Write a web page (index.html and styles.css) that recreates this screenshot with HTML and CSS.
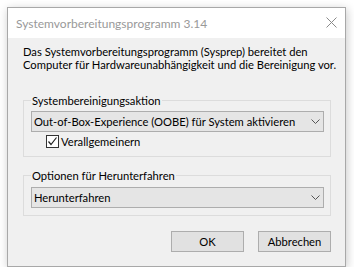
FILE: index.html
```html
<!DOCTYPE html>
<html lang="de">
<head>
    <meta charset="UTF-8">
    <title>Systemvorbereitungsprogramm 3.14</title>
    <link rel="stylesheet" href="styles.css">
</head>
<body>
    <div class="window">
        <div class="titlebar">
            <span class="title">Systemvorbereitungsprogramm 3.14</span>
            <svg class="close" width="11" height="11" viewBox="0 0 11 11">
                <path d="M0.5 0.5 L10.5 10.5 M10.5 0.5 L0.5 10.5" stroke="#8a8a8a" stroke-width="1" fill="none"/>
            </svg>
        </div>

        <div class="content">
            <p class="intro">Das Systemvorbereitungsprogramm (Sysprep) bereitet den<br>Computer für Hardwareunabhängigkeit und die Bereinigung vor.</p>

            <div class="group first">
                <span class="legend">Systembereinigungsaktion</span>
                <div class="combo">
                    <span>Out-of-Box-Experience (OOBE) für System aktivieren</span>
                    <svg width="9" height="5" viewBox="0 0 9 5"><path d="M0.5 0.5 L4.5 4.5 L8.5 0.5" stroke="#555" fill="none"/></svg>
                </div>
                <label class="check">
                    <span class="box">
                        <svg width="11" height="11" viewBox="0 0 11 11"><path d="M1.5 5.5 L4 8.5 L9.5 1.5" stroke="#222" stroke-width="1.2" fill="none"/></svg>
                    </span>
                    Verallgemeinern
                </label>
            </div>

            <div class="group second">
                <span class="legend">Optionen für Herunterfahren</span>
                <div class="combo">
                    <span>Herunterfahren</span>
                    <svg width="9" height="5" viewBox="0 0 9 5"><path d="M0.5 0.5 L4.5 4.5 L8.5 0.5" stroke="#555" fill="none"/></svg>
                </div>
            </div>

            <div class="buttons">
                <button class="btn">OK</button>
                <button class="btn">Abbrechen</button>
            </div>
        </div>
    </div>
</body>
</html>
```

FILE: styles.css
```css
body {
    margin: 0;
    background: #ffffff;
    font-family: 'Lato', 'Liberation Sans', sans-serif;
    font-size: 11.2px;
    color: #000;
}

.window {
    margin: 7px 0 0 7px;
    width: 337px;
    height: 258px;
    border: 1px solid #a8a8a8;
    box-shadow: 1px 2px 9px rgba(0,0,0,0.22);
    display: flex;
    flex-direction: column;
}

.titlebar {
    height: 30px;
    flex: none;
    background: #fff;
    display: flex;
    align-items: center;
    justify-content: space-between;
    padding: 0 8px 0 8px;
}

.title {
    color: #999;
    font-size: 12px;
}

.close {
    margin-top: -1px;
}

.content {
    flex: 1;
    background: #f0f0f0;
    padding: 7px 14px 0 15px;
    white-space: nowrap;
}

.intro {
    margin: 0;
    line-height: 13px;
}

/* group box with its caption over the top border */
.group {
    position: relative;
    border: 1px solid #dcdcdc;
    padding: 10px 6px 7px 7px;
}

.group.first {
    margin-top: 29px;
}

.group.second {
    margin-top: 18px;
    padding-top: 11px;
}

.legend {
    position: absolute;
    top: -7px;
    left: 7px;
    padding: 0 1px;
    line-height: 13px;
    background: #f0f0f0;
}

.combo {
    height: 21px;
    box-sizing: border-box;
    border: 1px solid #adadad;
    background: #e5e5e5;
    display: flex;
    align-items: center;
    justify-content: space-between;
    padding: 0 3px 0 2px;
}

.check {
    display: flex;
    align-items: center;
    margin: 3px 0 1px 15px;
    height: 13px;
}

.check .box {
    width: 11px;
    height: 11px;
    border: 1px solid #333;
    background: #fff;
    margin-right: 2px;
    display: flex;
}

.buttons {
    display: flex;
    justify-content: flex-end;
    gap: 14px;
    margin-top: 15px;
}

.btn {
    width: 73px;
    height: 21px;
    border: 1px solid #adadad;
    background: #e1e1e1;
    font-family: inherit;
    font-size: 11.2px;
    padding: 0;
    color: #000;
}
```
